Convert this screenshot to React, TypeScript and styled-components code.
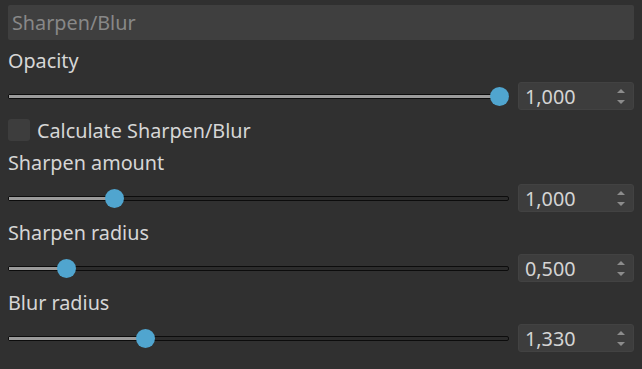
import React from "react";
import styled, { createGlobalStyle } from "styled-components";

const Global = createGlobalStyle`
  html, body { margin: 0; padding: 0; background: #303030; }
  body { font-family: "Noto Sans", "Open Sans", sans-serif; }
`;

const Panel = styled.div`
  width: 642px;
  height: 369px;
  box-sizing: border-box;
  padding: 5px 8px 0 8px;
  background: #303030;
  display: flex;
  flex-direction: column;
`;

const Header = styled.div`
  height: 35px;
  box-sizing: border-box;
  background: #3f3f3f;
  border-radius: 2px;
  padding-left: 4px;
  display: flex;
  align-items: center;
  color: #888888;
  font-size: 19.8px;
`;

const Label = styled.div`
  margin-top: 9px;
  height: 24px;
  line-height: 24px;
  color: #d6d6d6;
  font-size: 19.8px;
`;

const SliderRow = styled.div`
  margin-top: 9px;
  height: 28px;
  display: flex;
  align-items: center;
  gap: 9px;
`;

const Track = styled.div`
  position: relative;
  flex: 1;
  height: 5px;
  box-sizing: border-box;
  border: 1px solid #0c0c0c;
  border-radius: 2px;
  background: #2c2c2c;
`;

const Fill = styled.div`
  height: 100%;
  background: #9a9a9a;
`;

const Thumb = styled.div`
  position: absolute;
  top: 50%;
  width: 19px;
  height: 19px;
  margin-left: -9.5px;
  margin-top: -9.5px;
  border-radius: 50%;
  background: #50a5cf;
`;

const Spin = styled.div`
  width: 116px;
  height: 28px;
  box-sizing: border-box;
  background: #3d3d3d;
  border: 1px solid #424242;
  border-radius: 3px;
  display: flex;
  align-items: center;
  padding-left: 6px;
  padding-right: 8px;
  color: #d4d4d4;
  font-size: 19.8px;
`;

const SpinValue = styled.span`
  flex: 1;
`;

const Arrows = styled.div`
  display: flex;
  flex-direction: column;
  gap: 7px;
  align-items: center;
`;

const Arrow = styled.div<{ $down?: boolean }>`
  width: 0;
  height: 0;
  border-left: 4px solid transparent;
  border-right: 4px solid transparent;
  ${(p) =>
    p.$down
      ? "border-top: 4px solid #8c8c8c;"
      : "border-bottom: 4px solid #8c8c8c;"}
`;

const CheckRow = styled.div`
  margin-top: 8px;
  height: 24px;
  display: flex;
  align-items: center;
  gap: 7px;
  color: #d6d6d6;
  font-size: 19.8px;
`;

const Box = styled.div`
  width: 22px;
  height: 22px;
  border-radius: 3px;
  background: #3d3d3d;
  box-sizing: border-box;
`;

function Slider({ value, max }: { value: number; max: number }) {
  const pct = value / max;
  const left = `calc(9px + (100% - 18px) * ${pct})`;
  return (
    <SliderRow>
      <Track>
        <Fill style={{ width: left }} />
        <Thumb style={{ left }} />
      </Track>
      <Spin>
        <SpinValue>{value.toFixed(3).replace(".", ",")}</SpinValue>
        <Arrows>
          <Arrow />
          <Arrow $down />
        </Arrows>
      </Spin>
    </SliderRow>
  );
}

export default function App() {
  return (
    <Panel>
      <Global />
      <Header>Sharpen/Blur</Header>
      <Label>Opacity</Label>
      <Slider value={1} max={1} />
      <CheckRow>
        <Box />
        Calculate Sharpen/Blur
      </CheckRow>
      <Label>Sharpen amount</Label>
      <Slider value={1} max={5} />
      <Label>Sharpen radius</Label>
      <Slider value={0.5} max={5} />
      <Label>Blur radius</Label>
      <Slider value={1.33} max={5} />
    </Panel>
  );
}
